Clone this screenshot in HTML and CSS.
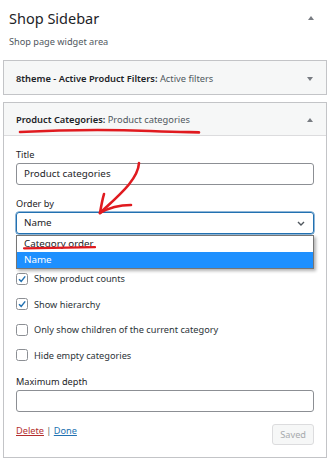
FILE: index.html
```html
<!DOCTYPE html>
<html lang="en">
    <head>
        <meta charset="UTF-8">
        <meta name="viewport" content="width=device-width, initial-scale=1.0">
        <link rel="stylesheet" href="styles.css">
        <title>Shop Sidebar</title>
    </head>

    <body>
        <div class="sidebar">
            <div class="sidebar-head">
                <h2 class="sidebar-title">Shop Sidebar</h2>
                <span class="toggle up"></span>
            </div>
            <p class="sidebar-desc">Shop page widget area</p>

            <div class="widget">
                <div class="widget-top">
                    <h3 class="widget-title">8theme - Active Product Filters: <span class="in-title">Active filters</span></h3>
                    <span class="toggle down"></span>
                </div>
            </div>

            <div class="widget open">
                <div class="widget-top">
                    <h3 class="widget-title">Product Categories: <span class="in-title">Product categories</span></h3>
                    <span class="toggle up"></span>
                </div>
                <div class="widget-inside">
                    <div class="field">
                        <label>Title</label>
                        <div class="input">Product categories</div>
                    </div>
                    <div class="field">
                        <label>Order by</label>
                        <div class="select-wrap">
                            <div class="input select">Name
                                <svg class="chevron" width="8" height="5" viewBox="0 0 8 5"><polyline points="1,1 4,4 7,1" fill="none" stroke="#50575e" stroke-width="1.4"/></svg>
                            </div>
                            <ul class="options">
                                <li>Category order</li>
                                <li class="active">Name</li>
                            </ul>
                        </div>
                    </div>

                    <div class="checks">
                        <div class="check"><span class="box"></span>Show as dropdown</div>
                        <div class="check"><span class="box checked"><svg width="10" height="10" viewBox="0 0 10 10"><polyline points="2,5.2 4.2,7.4 8.2,2.4" fill="none" stroke="#2271b1" stroke-width="1.5"/></svg></span>Show product counts</div>
                        <div class="check"><span class="box checked"><svg width="10" height="10" viewBox="0 0 10 10"><polyline points="2,5.2 4.2,7.4 8.2,2.4" fill="none" stroke="#2271b1" stroke-width="1.5"/></svg></span>Show hierarchy</div>
                        <div class="check"><span class="box"></span>Only show children of the current category</div>
                        <div class="check"><span class="box"></span>Hide empty categories</div>
                    </div>

                    <div class="field">
                        <label>Maximum depth</label>
                        <div class="input"></div>
                    </div>

                    <div class="widget-actions">
                        <div class="links"><a class="delete">Delete</a> | <a class="done">Done</a></div>
                        <span class="btn-saved">Saved</span>
                    </div>
                </div>
            </div>
        </div>

        <!-- hand-drawn marks -->
        <svg class="marks" width="327" height="461" viewBox="0 0 327 461">
            <g fill="none" stroke="#e01a1f" stroke-width="2.6" stroke-linecap="round">
                <path d="M20 132 C 60 130, 110 129.5, 150 131 S 190 131.8, 199 132.4"/>
                <path d="M24 248.3 C 50 248, 75 247.4, 95 247.2" stroke-width="2.2"/>
                <path d="M139 163 C 138 180, 118 196, 100 213"/>
                <path d="M104 194 C 102 201, 101 207, 100 213"/>
                <path d="M100 213 C 110 207, 120 205, 131 205"/>
            </g>
        </svg>
    </body>
</html>
```

FILE: styles.css
```css
* { box-sizing: border-box; }

body {
    margin: 0; background: #fff;
    font-family: "Noto Sans", "Open Sans", sans-serif;
    font-size: 9.2px; color: #1d2327;
}

.sidebar { width: 324px; margin-left: 3px; padding-bottom: 6px; }

.sidebar-head {
    display: flex; justify-content: space-between; align-items: center;
    padding: 9px 13px 0 6px;
}

.sidebar-title { margin: 0; font-size: 14.5px; font-weight: 400; line-height: 18px; }

.sidebar-desc { margin: 8px 0 11px 6px; line-height: 14px; color: #50575e; }

.toggle { width: 0; height: 0; border-left: 3.5px solid transparent; border-right: 3.5px solid transparent; }
.toggle.up { border-bottom: 4px solid #787c82; }
.toggle.down { border-top: 4px solid #787c82; }

.widget {
    border: 1px solid #c3c4c7; background: #fff;
    margin-bottom: 7px;
}

.widget-top {
    display: flex; justify-content: space-between; align-items: center;
    height: 33px; padding: 2px 13px 0 12px; background: #f6f7f7;
}

.widget.open .widget-top { border-bottom: 1px solid #dcdcde; }

.widget-title { margin: 0; font-size: 9.3px; font-weight: 600; line-height: 14px; }
.in-title { font-weight: 400; color: #50575e; }

.widget-inside { padding: 12px 12px 12px; }

.field { margin-bottom: 12px; }

.field label { display: block; line-height: 14px; margin-bottom: 1px; }

.input {
    height: 22px; padding: 0 7px; line-height: 20px;
    border: 1px solid #8c8f94; border-radius: 3px; font-size: 9.8px;
}

.select-wrap { position: relative; }

.select {
    display: flex; justify-content: space-between; align-items: center;
    height: 22px; border-color: #2271b1; box-shadow: 0 0 0 0.5px #2271b1;
}
.chevron { margin-right: 1px; }

.options {
    position: absolute; top: 23px; left: 0; right: 0;
    margin: 0; padding: 0; list-style: none;
    background: #fff; border: 1px solid #767676;
    box-shadow: 2px 2px 3px rgba(0, 0, 0, 0.3);
    font-size: 9.8px;
}
.options li { line-height: 16px; padding: 0 7px; }
.options li.active { background: #1e90ff; color: #fff; }

.checks { display: flex; flex-direction: column; gap: 11.5px; margin-bottom: 13px; }

.check { display: flex; align-items: center; height: 14px; color: #2c3338; }

.box {
    display: flex; align-items: center; justify-content: center;
    width: 12px; height: 12px; margin-right: 6px;
    border: 1px solid #8c8f94; border-radius: 2.5px;
}

.widget-actions { display: flex; justify-content: space-between; align-items: flex-start; margin-top: 1px; }

.links { line-height: 14px; color: #50575e; }
.links a { text-decoration: underline; }
.delete { color: #b32d2e; }
.done { color: #2271b1; }

.btn-saved {
    height: 21px; padding: 0 7px; line-height: 19px;
    border: 1px solid #dcdcde; border-radius: 3px;
    background: #f6f7f7; color: #a7aaad;
}

.marks { position: absolute; top: 0; left: 0; pointer-events: none; }
```
